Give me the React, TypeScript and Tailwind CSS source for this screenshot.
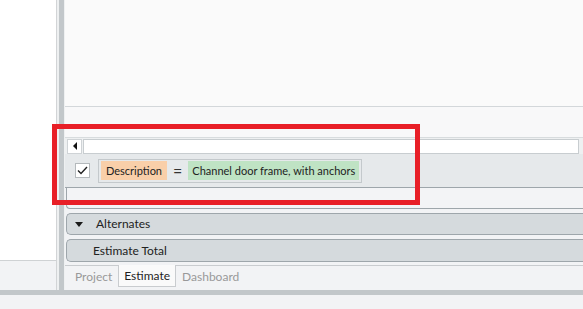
import React from 'react';

const font = { fontFamily: 'Lato, "Noto Sans", sans-serif' };

const App: React.FC = () => {
  return (
    <div className="relative w-[583px] h-[309px] overflow-hidden bg-[#f2f3f5] text-[12px] text-[#222]" style={font}>
      <div className="flex h-[290px]">
        {/* left panel */}
        <div className="w-[57px] flex flex-col border-r border-[#d2d4d6]">
          <div className="h-[261px] shrink-0 bg-white border-b border-[#cfd2d4]" />
          <div className="flex-1 bg-[#f2f3f5]" />
        </div>
        {/* splitter */}
        <div className="w-[2px] bg-[#eef0f1]" />
        <div className="w-[5px] bg-[#c2c7ca]" />
        <div className="w-[1px] bg-[#eef0f1]" />

        {/* right pane */}
        <div className="flex-1 flex flex-col">
          <div className="h-[107px] shrink-0 bg-[#fafafa] border-b border-[#d3d7da]" />
          <div className="h-[30px] shrink-0 bg-[#f8f8f9]" />

          {/* scroll row */}
          <div className="h-[17px] shrink-0 flex items-center gap-[1px] pl-[2px] pr-[4px] bg-[#eef0f1] border-t border-[#d8dcde]">
            <div className="w-[15px] h-[15px] bg-white border border-[#cfd3d6] flex items-center justify-center">
              <svg width="6" height="8" viewBox="0 0 6 8">
                <path d="M5 0 L1 4 L5 8 Z" fill="#111" />
              </svg>
            </div>
            <div className="flex-1 h-[15px] bg-white border border-[#c8cdd0]" />
          </div>

          {/* filter band */}
          <div className="h-[34px] shrink-0 bg-[#e6e9eb] border-b border-[#9ea6ab] flex items-center pl-[10px]">
            <div className="w-[15px] h-[15px] bg-white border border-[#b4b9bc] flex items-center justify-center">
              <svg width="11" height="9" viewBox="0 0 11 9">
                <path d="M1 4.5 L4 7.5 L10 1" stroke="#222" strokeWidth="1.4" fill="none" />
              </svg>
            </div>
            <div className="ml-[8px] flex items-center h-[24px] border border-[#c4c9cc] px-[2px] gap-[6px] text-[11px]">
              <span className="h-[19px] px-[5px] bg-[#f9cfa9] flex items-center leading-none">Description</span>
              <span className="text-[16px] leading-none text-[#333]">=</span>
              <span className="h-[19px] px-[4px] bg-[#bfe3c4] flex items-center leading-none">Channel door frame, with anchors</span>
            </div>
          </div>

          <div className="ml-[1px] h-[21px] shrink-0 bg-[#f3f4f6] border-l border-b border-[#9ea6ab] rounded-bl-[4px]" />

          {/* group bars */}
          <div className="mt-[4px] ml-[1px] h-[22px] shrink-0 bg-[#d5dadd] border border-r-0 border-[#9ea6ab] rounded-l-[5px] flex items-center pl-[8px]">
            <svg width="8" height="5" viewBox="0 0 8 5">
              <path d="M0 0 L8 0 L4 5 Z" fill="#1a1a1a" />
            </svg>
            <span className="ml-[13px]">Alternates</span>
          </div>
          <div className="mt-[4px] ml-[1px] h-[23px] shrink-0 bg-[#d5dadd] border border-r-0 border-[#9ea6ab] rounded-l-[5px] flex items-center pl-[26px]">
            Estimate Total
          </div>

          {/* tabs */}
          <div className="mt-[3px] flex-1 border-t border-[#c9cccf] flex pl-[9px]">
            <div className="h-[21px] px-[1px] flex items-center text-[#999]">Project</div>
            <div className="ml-[5px] h-[22px] -mt-[1px] px-[5px] flex items-center bg-[#fafafa] border border-t-0 border-[#c9cccf] text-[#1e1e1e]">Estimate</div>
            <div className="ml-[6px] h-[21px] flex items-center text-[#999]">Dashboard</div>
          </div>
        </div>
      </div>
      <div className="h-[5px] bg-[#c2c7ca]" />

      {/* red annotation */}
      <div className="absolute left-[52px] top-[124px] w-[368px] h-[81px] border-[5px] border-[#e81f27] pointer-events-none" />
    </div>
  );
};

export default App;
